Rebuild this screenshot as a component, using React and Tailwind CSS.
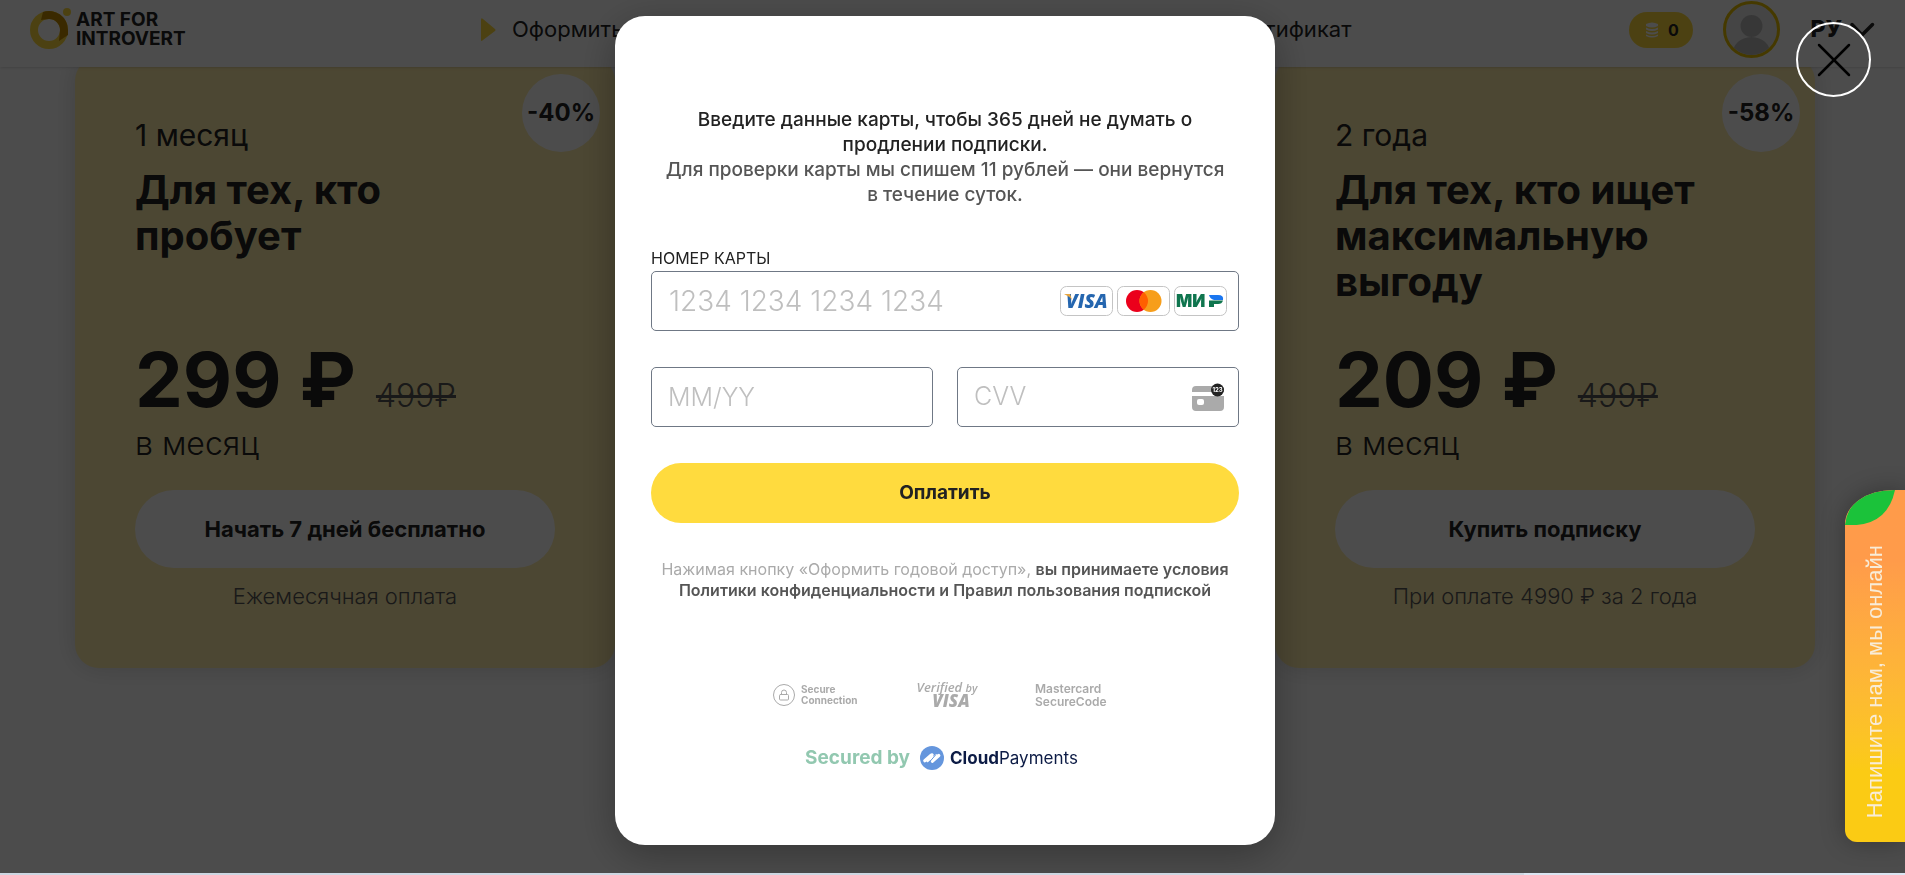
import { useState } from 'react';
import { X, Gift, Lock } from 'lucide-react';

const PLANS = [
  { key: 'month', period: '1 месяц', title: 'Для тех, кто\nпробует', price: '299 ₽', oldPrice: '499₽', discount: '-40%', action: 'Начать 7 дней бесплатно', note: 'Ежемесячная оплата' },
  { key: 'two-years', period: '2 года', title: 'Для тех, кто ищет\nмаксимальную\nвыгоду', price: '209 ₽', oldPrice: '499₽', discount: '-58%', action: 'Купить подписку', note: 'При оплате 4990 ₽ за 2 года' },
];

function Logo() {
  return (
    <a href="#" className="flex items-start gap-1 w-40 shrink-0">
      <svg className="w-[42px] h-[44px] shrink-0" viewBox="0 0 42 44">
        <circle cx="19" cy="22" r="15" fill="none" stroke="#ffdb3e" strokeWidth="8" />
        <path d="M13 4A19 19 0 0 1 38 22v5l-9 6 1-11A11 11 0 0 0 19 11l-8 1z" fill="#c28a00" />
        <circle cx="37" cy="4" r="4" fill="#ffdb3e" />
      </svg>
      <span className="pt-[2px] text-[19px] leading-[19px] font-bold text-[#222]">
        ART FOR<br />INTROVERT
      </span>
    </a>
  );
}

function Header() {
  return (
    <header className="sticky top-0 z-10 flex items-center h-[67px] px-[30px] pb-[8px] bg-white shadow-sm">
      <Logo />
      <nav className="flex flex-1 justify-between px-[278px] text-[22px] whitespace-nowrap text-[#222]">
        <a href="#" className="flex items-center gap-4 ml-3">
          <svg className="w-4 h-6" viewBox="0 0 16 24">
            <path d="M1 2v20q0 2 2 0L15 13q1-1 0-2L3 1Q1-1 1 2z" fill="#ffdb3e" />
          </svg>
          Оформить подписку
        </a>
        <a href="#" className="flex items-center gap-3">
          <Gift className="w-5 h-7 text-[#ffdb3e]" />
          Подарить сертификат
        </a>
      </nav>
      <div className="flex items-center gap-[30px] shrink-0">
        <button type="button" className="flex items-center justify-center gap-2 w-16 h-9 rounded-full bg-[#ffdb3e] text-[16px] font-bold text-[#222]">
          <svg className="w-4 h-4" viewBox="0 0 16 16" fill="#fff">
            <path d="M2 2q6-3 12 0v2q-6 3-12 0zM2 5.500q6 3 12 0v2q-6 3-12 0zM2 9q6 3 12 0v2q-6 3-12 0zM2 12.500q6 3 12 0v1.500q-6 3-12 0z" />
          </svg>
          0
        </button>
        <a href="#" aria-label="Профиль" className="w-[57px] h-[57px] rounded-full border-3 border-[#e6c000] bg-[#e8e8e8] overflow-hidden">
          <svg viewBox="0 0 51 51" fill="#b9b9b9">
            <circle cx="25.500" cy="22" r="11" />
            <path d="M6 51q2-17 19.500-18Q43 34 45 51z" />
          </svg>
        </a>
        <button type="button" className="flex items-center gap-[7px] text-[23px] font-extrabold text-[#222]">
          РУ
          <svg className="w-[26px] h-4" viewBox="0 0 26 16" fill="none">
            <path d="M3 2.500l10 10.500L23.500 2.500" stroke="currentColor" strokeWidth="3.500" strokeLinecap="round" />
          </svg>
        </button>
      </div>
    </header>
  );
}

function PlanCard({ plan }) {
  return (
    <article className="relative last:col-start-3 flex flex-col min-w-0 px-[60px] pt-[38px] pb-[56px] rounded-3xl bg-[#ffedaa] text-[#222] shadow-[0_0_24px_rgba(0,0,0,0.15)]">
      <span className="absolute top-[17px] right-[15px] flex items-center justify-center w-[78px] h-[78px] rounded-full bg-white text-[24px] font-bold">
        {plan.discount}
      </span>
      <p className="mt-[22px] text-[30px] leading-[36px]">{plan.period}</p>
      <h2 className="mt-[14px] min-h-[161px] text-[40px] leading-[46px] font-bold whitespace-pre-line">{plan.title}</h2>
      <p className="flex items-baseline gap-5 mt-[23px] leading-[56px]">
        <span className="text-[76px] font-bold">{plan.price}</span>
        <s className="text-[32px] font-light text-[#555]">{plan.oldPrice}</s>
      </p>
      <p className="text-[32px] leading-[40px] font-light">в месяц</p>
      <button type="button" className="mt-[26px] h-[78px] rounded-full bg-white text-[22px] font-bold">
        {plan.action}
      </button>
      <p className="mt-[12px] text-center text-[22px] leading-[32px] font-light text-[#555]">{plan.note}</p>
    </article>
  );
}

function CardBrands() {
  return (
    <div className="flex gap-1 shrink-0">
      <svg className="w-[53px] h-[30px]" viewBox="0 0 53 30">
        <rect x="0.500" y="0.500" width="52" height="29" rx="6" fill="#fff" stroke="#c4c4c4" />
        <text x="6" y="22" fontFamily="Open Sans, sans-serif" fontSize="19" fontWeight="800" fontStyle="italic" fill="#2566af">VISA</text>
        <path d="M4 8h6l2 6q-3-4-8-6z" fill="#e6a540" />
      </svg>
      <svg className="w-[53px] h-[30px]" viewBox="0 0 53 30">
        <rect x="0.500" y="0.500" width="52" height="29" rx="6" fill="#fff" stroke="#c4c4c4" />
        <circle cx="20" cy="15" r="11" fill="#eb001b" />
        <circle cx="33.500" cy="15" r="11" fill="#f79e1b" />
        <path d="M26.750 6.300a11 11 0 0 1 0 17.400a11 11 0 0 1 0-17.400z" fill="#ff5f00" />
      </svg>
      <svg className="w-[53px] h-[30px]" viewBox="0 0 53 30">
        <rect x="0.500" y="0.500" width="52" height="29" rx="6" fill="#fff" stroke="#c4c4c4" />
        <text x="2" y="21" fontFamily="Inter, sans-serif" fontSize="17" fontWeight="900" fill="#0f754e">МИ</text>
        <path d="M35 14.500h14q-1 3.500-5 3.500h-4v3h-5z" fill="#0f754e" />
        <path d="M35 9h9q6 0 5 5h-9q-4-1-5-5z" fill="#1a76f0" />
      </svg>
    </div>
  );
}

function CvvIcon() {
  return (
    <svg className="w-8 h-7 shrink-0" viewBox="0 0 32 28">
      <path d="M0 9V7q0-4 4-4h24q4 0 4 4v2zM0 13h32v11q0 4-4 4H4q-4 0-4-4z" fill="#aaa" />
      <rect x="5" y="16" width="7" height="6" rx="2" fill="#fff" />
      <circle cx="25.500" cy="7" r="6.500" fill="#222" />
      <text x="25.500" y="9" textAnchor="middle" fontFamily="Inter, sans-serif" fontSize="6" fontWeight="700" fill="#fff">123</text>
    </svg>
  );
}

function SecurityBadges() {
  return (
    <div className="flex items-center justify-center gap-14 mt-[80px] mr-2 text-[#aaa]">
      <div className="flex items-center gap-[6px] w-[86px]">
        <span className="flex items-center justify-center w-[22px] h-[22px] rounded-full border border-[#aaa] shrink-0">
          <Lock className="w-3 h-3" strokeWidth={2} />
        </span>
        <span className="text-[10px] leading-[11px] font-bold">Secure<br />Connection</span>
      </div>
      <div className="flex flex-col items-center w-16 font-['Open_Sans',sans-serif] italic font-bold">
        <span className="text-[13px] leading-[13px] font-semibold whitespace-nowrap">Verified <span className="text-[11px]">by</span></span>
        <span className="ml-2 text-[17px] leading-[14px] font-extrabold">VISA</span>
      </div>
      <div className="w-[74px] text-[12px] leading-[13px] font-semibold">Mastercard<br />SecureCode</div>
    </div>
  );
}

function SecuredBy() {
  return (
    <div className="flex items-center justify-center gap-[10px] mt-[37px] mr-[7px] leading-[26px]">
      <span className="text-[19px] font-bold text-[#92c8b0]">Secured by</span>
      <a href="#" className="flex items-center gap-[6px] text-[17px] text-[#0c1b45]">
        <svg className="w-6 h-6" viewBox="0 0 24 24">
          <circle cx="12" cy="12" r="12" fill="#6596dd" />
          <path d="M4.800 14.800l6-5.300q1-.900 1.300-.700M12.300 15.300l6.500-5.800" stroke="#fff" strokeWidth="3.200" strokeLinecap="round" fill="none" />
          <path d="M7.500 15.300l5-4.500M11.500 13.500l5-4.500" stroke="#fff" strokeWidth="2" strokeLinecap="round" />
          <path d="M9 16.500l7-8" stroke="#6596dd" strokeWidth="1" />
        </svg>
        <span><b>Cloud</b>Payments</span>
      </a>
    </div>
  );
}

function PaymentModal({ onClose }) {
  return (
    <div className="fixed inset-0 z-20 flex justify-center items-start pt-4 bg-black/70">
      <button
        type="button"
        aria-label="Закрыть"
        onClick={onClose}
        className="absolute top-[22px] right-[34px] flex items-center justify-center w-[75px] h-[75px] rounded-full border-2 border-white text-black"
      >
        <X className="w-[60px] h-[60px] shrink-0" strokeWidth={1} />
      </button>
      <form
        role="dialog"
        onSubmit={(e) => e.preventDefault()}
        className="mr-[15px] w-[660px] px-9 pt-[91px] pb-[74px] rounded-[30px] bg-white text-[#222] shadow-[0_10px_40px_rgba(0,0,0,0.3)]"
      >
        <p className="text-center text-[19px] leading-[25px] font-medium">
          Введите данные карты, чтобы 365 дней не думать о<br />продлении подписки.
        </p>
        <p className="text-center text-[19px] leading-[25px] font-medium text-[#555]">
          Для проверки карты мы спишем 11 рублей — они вернутся<br />в течение суток.
        </p>
        <label htmlFor="card" className="block mt-[40px] mb-[2px] text-[16px] leading-[22px]">НОМЕР КАРТЫ</label>
        <div className="flex items-center h-[60px] pl-[17px] pr-[11px] border border-[#6f7885] rounded-[5px]">
          <input id="card" placeholder="1234 1234 1234 1234" className="flex-1 min-w-0 text-[28px] font-light outline-none placeholder:text-[#bfbfbf]" />
          <CardBrands />
        </div>
        <div className="grid grid-cols-2 gap-6 mt-9">
          <input aria-label="Срок действия" placeholder="MM/YY" className="h-[60px] min-w-0 px-[16px] border border-[#6f7885] rounded-[5px] text-[25px] font-light outline-none placeholder:text-[#bfbfbf]" />
          <div className="flex items-center h-[60px] pl-[16px] pr-[14px] border border-[#6f7885] rounded-[5px]">
            <input aria-label="CVV" placeholder="CVV" className="flex-1 min-w-0 text-[25px] font-light outline-none placeholder:text-[#bfbfbf]" />
            <CvvIcon />
          </div>
        </div>
        <button type="submit" className="w-full h-[60px] mt-9 rounded-full bg-[#ffdb3e] text-[19px] font-bold">
          Оплатить
        </button>
        <p className="mt-9 text-center text-[16px] leading-[21px] text-[#aaa]">
          Нажимая кнопку «Оформить годовой доступ», <a href="#" className="font-semibold text-[#555]">вы принимаете условия<br />Политики конфиденциальности и Правил пользования подпиской</a>
        </p>
        <SecurityBadges />
        <SecuredBy />
      </form>
    </div>
  );
}

function ChatTab() {
  return (
    <button
      type="button"
      className="fixed right-0 bottom-[33px] z-30 flex items-end justify-center w-[60px] h-[352px] pb-6 rounded-bl-xl rounded-tl-[48px_34px] bg-linear-to-b from-[#ff9b4a] from-20% to-[#fbcb14] to-80% overflow-hidden shadow-[0_0_24px_rgba(0,0,0,0.3)]"
    >
      <svg className="absolute top-0 left-0 w-[50px] h-[35px]" viewBox="0 0 50 35">
        <path d="M0 35Q4 0 50 0Q42 38 0 35z" fill="#1bc23a" />
      </svg>
      <span className="rotate-180 [writing-mode:vertical-rl] font-['Liberation_Sans',sans-serif] text-[22px] leading-[30px] text-[#f8ecd8]">
        Напишите нам, мы онлайн
      </span>
    </button>
  );
}

export default function App() {
  const [open, setOpen] = useState(true);

  return (
    <div className="min-h-screen bg-white font-['Inter',sans-serif]">
      <Header />
      <main className="grid grid-cols-3 gap-[60px] -mt-[10px] pl-[75px] pr-[90px]">
        {PLANS.map((plan) => <PlanCard key={plan.key} plan={plan} />)}
      </main>
      {open && <PaymentModal onClose={() => setOpen(false)} />}
      <ChatTab />
      <div className="fixed inset-x-0 bottom-0 z-40 h-[2px] bg-[#dbe5f2]">
        <div className="w-4/5 h-full bg-[#cdd7e2]" />
      </div>
    </div>
  );
}
